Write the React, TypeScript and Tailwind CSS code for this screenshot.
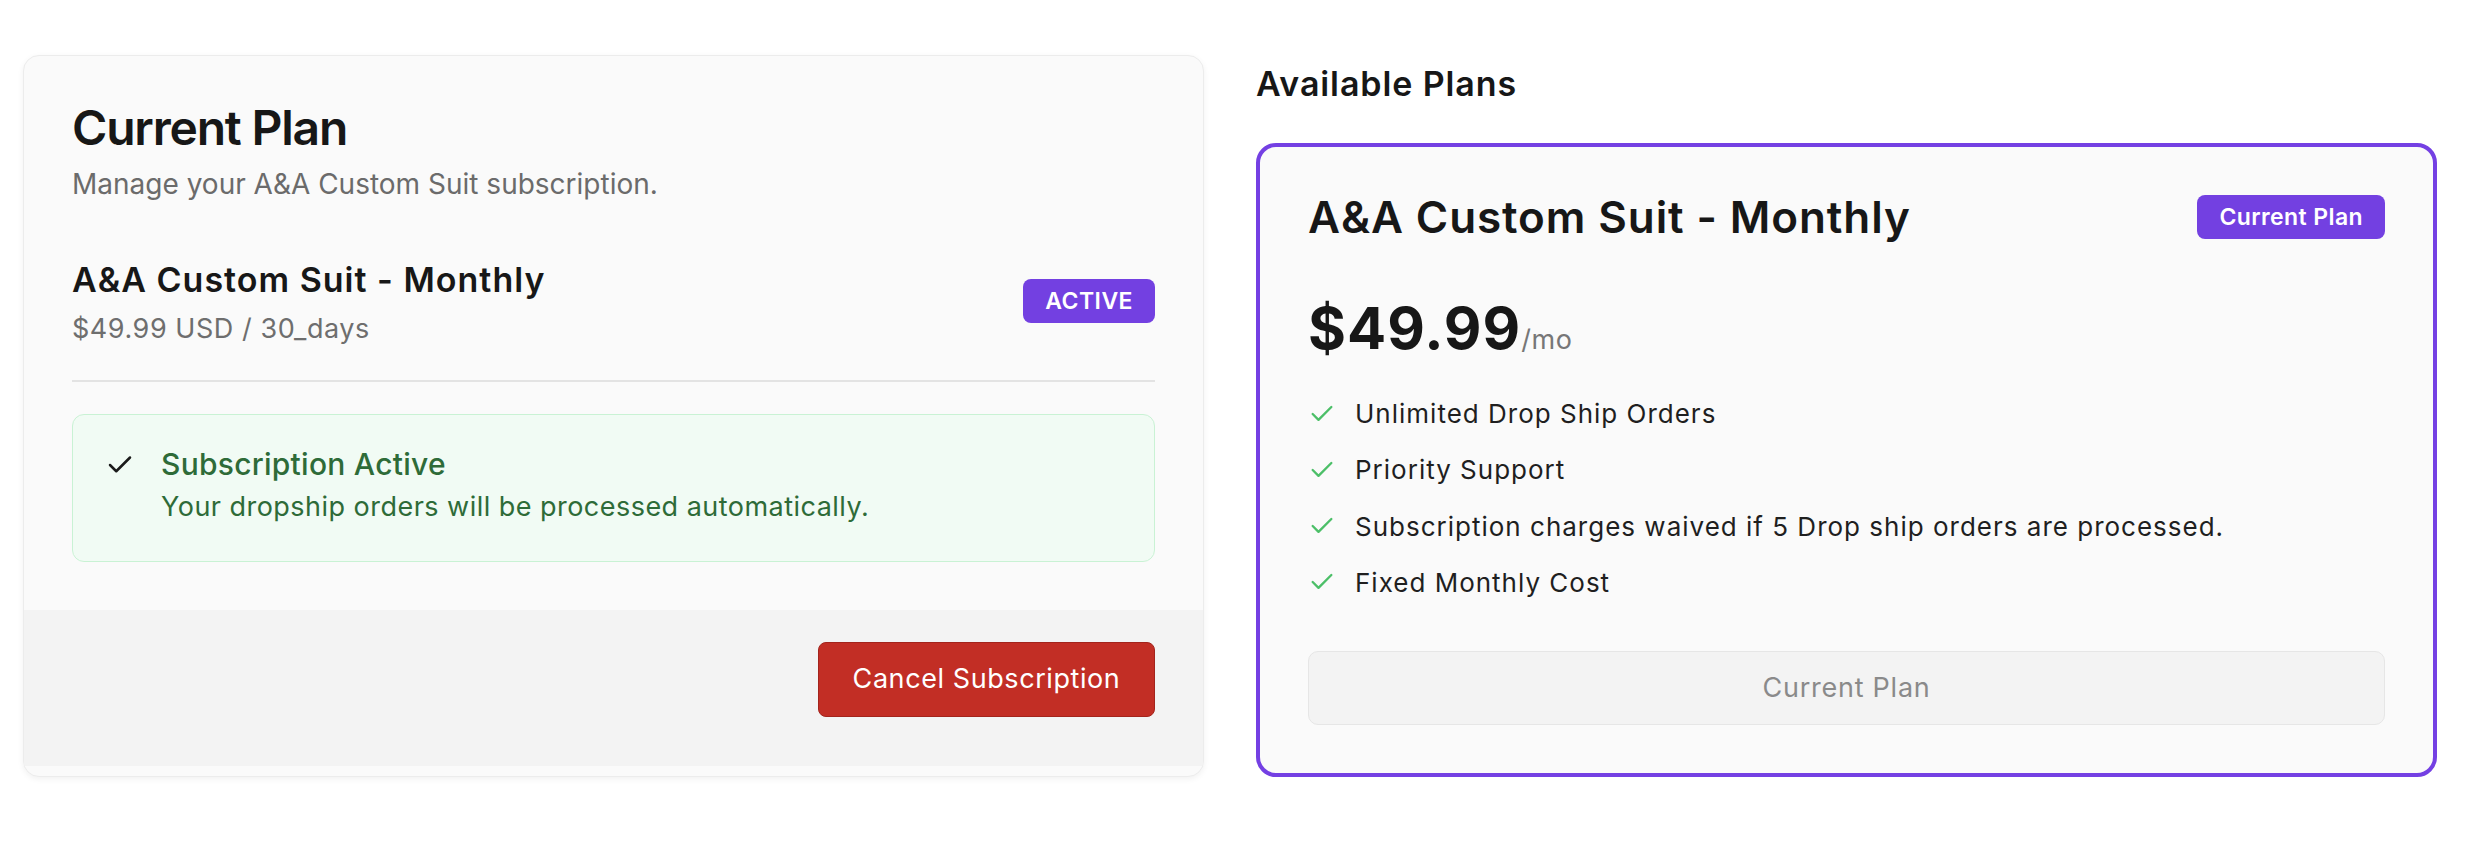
import React from 'react';
import { Check } from 'lucide-react';

const features = [
    'Unlimited Drop Ship Orders',
    'Priority Support',
    'Subscription charges waived if 5 Drop ship orders are processed.',
    'Fixed Monthly Cost',
];

const CurrentPlanCard: React.FC = () => (
    <div className="w-[1181px] shrink-0 overflow-hidden rounded-[16px] border border-[#ececec] bg-[#fafafa] pb-[10px] shadow-[0_2px_6px_rgba(0,0,0,0.06)]">
        <div className="px-[48px] pt-[43px] pb-[48px]">
            <h1 className="text-[48px] leading-[1.2] font-semibold tracking-[-1.2px] text-[#171717]">Current Plan</h1>
            <p className="mt-[11px] text-[28px] leading-[1.2] text-[#6b6b6b]">Manage your A&amp;A Custom Suit subscription.</p>

            {/* Plan summary */}
            <div className="mt-[59px] flex items-start justify-between">
                <div>
                    <h3 className="text-[34px] leading-[1.2] font-semibold tracking-[1px] text-[#171717]">A&amp;A Custom Suit - Monthly</h3>
                    <p className="mt-[12px] text-[27px] leading-[1.2] tracking-[0.55px] text-[#6e6e6e]">$49.99 USD / 30_days</p>
                </div>
                <span className="mt-[19px] flex h-[44px] items-center rounded-[8px] bg-[#7340e1] px-[22px] text-[23px] font-semibold tracking-[0.02em] text-white">
                    ACTIVE
                </span>
            </div>

            <div className="mt-[35px] h-[2px] bg-[#e3e3e3]" />

            {/* Status */}
            <div className="mt-[32px] flex items-start gap-[26px] rounded-[12px] border border-[#c9f2d4] bg-[#f1fbf4] pl-[32px] pt-[31px] pb-[37px]">
                <Check className="mt-[4px] h-[30px] w-[30px] text-[#1a1a1a]" strokeWidth={2} />
                <div>
                    <p className="text-[30px] leading-[1.2] font-medium tracking-[0.26px] text-[#2e6b38]">Subscription Active</p>
                    <p className="mt-[9px] text-[27px] leading-[1.2] tracking-[0.47px] text-[#2e6b38]">Your dropship orders will be processed automatically.</p>
                </div>
            </div>
        </div>

        <div className="flex justify-end bg-[#f3f3f3] px-[48px] pt-[32px] pb-[49px]">
            <button className="flex h-[75px] w-[337px] items-center justify-center rounded-[8px] border border-[#a3241c] bg-[#c22e25] text-[27px] tracking-[0.58px] text-white">
                Cancel Subscription
            </button>
        </div>
    </div>
);

const AvailablePlans: React.FC = () => (
    <div className="w-[1181px] shrink-0">
        <h2 className="mt-[9px] text-[34px] leading-[1.2] font-semibold tracking-[0.9px] text-[#171717]">Available Plans</h2>

        <div className="mt-[38px] rounded-[20px] border-[4px] border-[#7440e3] bg-[#fafafa] px-[48px] pt-[44px] pb-[48px]">
            <div className="flex items-center justify-between">
                <h3 className="text-[44px] leading-[1.2] font-semibold tracking-[0.9px] text-[#171717]">A&amp;A Custom Suit - Monthly</h3>
                <span className="flex h-[44px] items-center rounded-[8px] bg-[#7340e1] px-[22px] text-[23px] font-semibold tracking-[0.4px] text-white">
                    Current Plan
                </span>
            </div>

            <div className="mt-[50px] flex items-baseline">
                <span className="text-[58px] leading-[1.2] font-bold tracking-[1px] text-[#171717]">$49.99</span>
                <span className="text-[27px] tracking-[0.6px] text-[#777777]">/mo</span>
            </div>

            <ul className="mt-[35px] flex flex-col gap-[25px]">
                {features.map((f) => (
                    <li key={f} className="flex items-center gap-[19px]">
                        <Check className="h-[28px] w-[28px] text-[#4cbf68]" strokeWidth={2} />
                        <span className="text-[26px] leading-[1.2] tracking-[1px] text-[#1f1f1f]">{f}</span>
                    </li>
                ))}
            </ul>

            <button className="mt-[53px] flex h-[74px] w-full items-center justify-center rounded-[10px] border border-[#e6e6e6] bg-[#f3f3f3] text-[27px] tracking-[0.75px] text-[#8a8a8a]">
                Current Plan
            </button>
        </div>
    </div>
);

export default function App() {
    return (
        <div className="min-h-screen bg-white font-['Inter','Noto_Sans',sans-serif]">
            <div className="flex items-start gap-[52px] pl-[23px] pt-[55px]">
                <CurrentPlanCard />
                <AvailablePlans />
            </div>
        </div>
    );
}
